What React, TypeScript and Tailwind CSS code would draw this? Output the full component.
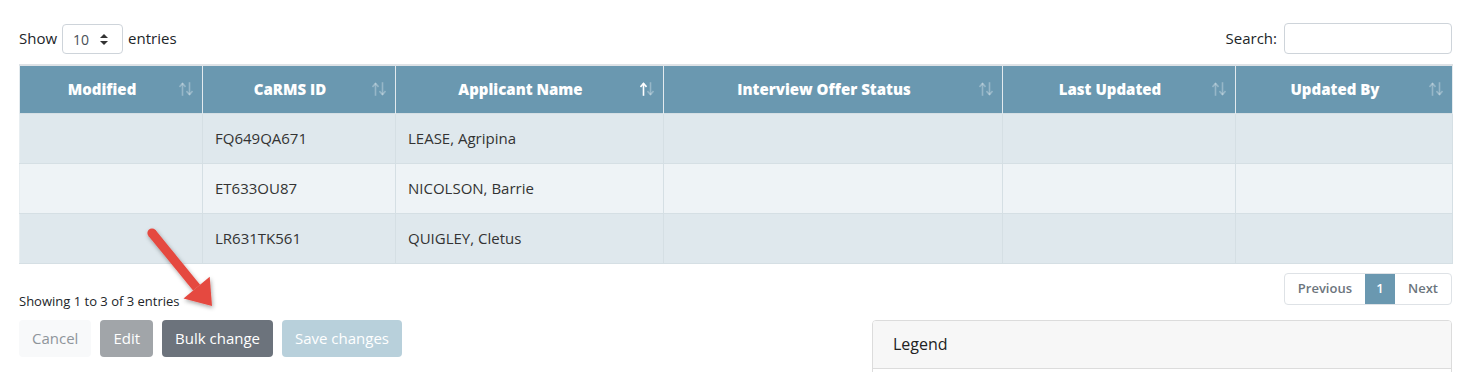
import { ReactNode } from "react";

const font = { fontFamily: '"Open Sans", "Liberation Sans", sans-serif' };

interface Col {
    label: string
    width: string
    sorted?: boolean
}

const columns: Col[] = [
    { label: "Modified", width: "w-[183px]" },
    { label: "CaRMS ID", width: "w-[193px]" },
    { label: "Applicant Name", width: "w-[268px]", sorted: true },
    { label: "Interview Offer Status", width: "w-[339px]" },
    { label: "Last Updated", width: "w-[233px]" },
    { label: "Updated By", width: "w-[217px]" },
];

const rows = [
    ["", "FQ649QA671", "LEASE, Agripina", "", "", ""],
    ["", "ET633OU87", "NICOLSON, Barrie", "", "", ""],
    ["", "LR631TK561", "QUIGLEY, Cletus", "", "", ""],
];

// up/down arrows used by DataTables for sortable headers
const SortIcon = ({ active }: { active?: boolean }) => (
    <svg className="absolute right-[9px] top-1/2 -translate-y-1/2" width="14" height="14" viewBox="0 0 14 14">
        <g fill="none" strokeWidth="1.6" strokeLinecap="square">
            <g stroke={active ? "#ffffff" : "rgba(255,255,255,0.3)"}>
                <path d="M3.5 13V1.8" />
                <path d="M1 4.3L3.5 1.5L6 4.3" />
            </g>
            <g stroke="rgba(255,255,255,0.3)">
                <path d="M10.5 1V12.2" />
                <path d="M8 9.7L10.5 12.5L13 9.7" />
            </g>
        </g>
    </svg>
);

const Btn = ({ children, className }: { children: ReactNode, className: string }) => (
    <button className={"h-[37px] rounded-[4px] px-[13px] text-[15px] whitespace-nowrap " + className}>{children}</button>
);

const Arrow = () => (
    <svg className="absolute left-0 top-0 pointer-events-none" width="260" height="330" viewBox="0 0 260 330">
        <defs>
            <filter id="sh" x="-20%" y="-20%" width="140%" height="140%">
                <feDropShadow dx="1" dy="2" stdDeviation="2" floodColor="#000" floodOpacity="0.35" />
            </filter>
        </defs>
        <g fill="#e5483f" filter="url(#sh)">
            <circle cx="152" cy="233" r="4.6" />
            <polygon points="148.5,235.9 155.5,230.1 200.1,284.7 193.1,290.5" />
            <polygon points="183.5,298.5 209.7,276.7 212,306" />
        </g>
    </svg>
);

export default function App() {
    return (
        <div style={font} className="relative w-[1476px] h-[372px] overflow-hidden bg-white text-[#212529] pl-[19px] pr-[24px] pt-[22px]">
            {/* top controls */}
            <div className="flex justify-between items-center h-[32px] mb-[10px]">
                <div className="flex items-center text-[15px]">
                    <span>Show</span>
                    <div className="ml-[5px] mr-[5px] flex items-center justify-between w-[61px] h-[30px] mt-[2px] border border-[#ced4da] rounded-[4px] pl-[10px] pr-[14px] text-[14px]">
                        <span className="text-[#495057]">10</span>
                        <svg width="8" height="11" viewBox="0 0 8 11">
                            <path d="M4 0L8 4H0Z M0 7H8L4 11Z" fill="#333" />
                        </svg>
                    </div>
                    <span>entries</span>
                </div>
                <div className="flex items-center text-[15px]">
                    <span>Search:</span>
                    <input className="ml-[7px] w-[168px] h-[31px] border border-[#ced4da] rounded-[4px] outline-none" />
                </div>
            </div>

            {/* table */}
            <table className="w-full table-fixed border-collapse border-t-2 border-[#dee2e6]">
                <colgroup>
                    {columns.map((c) => <col key={c.label} className={c.width} />)}
                </colgroup>
                <thead>
                    <tr className="bg-[#6a98b0] text-white">
                        {columns.map((c) => (
                            <th key={c.label} className="relative h-[48px] border-x border-[#e3eaee] pl-[12px] pr-[30px] text-[15px] font-extrabold text-center whitespace-nowrap">
                                {c.label}
                                <SortIcon active={c.sorted} />
                            </th>
                        ))}
                    </tr>
                </thead>
                <tbody>
                    {rows.map((r, i) => (
                        <tr key={i} className={i % 2 === 1 ? "bg-[#eef3f6]" : "bg-[#dfe8ed]"}>
                            {r.map((cell, j) => (
                                <td key={j} className="h-[50px] border border-[#d5dfe4] border-l-[#e8eef1] px-[12px] text-[15px] text-[#333]">
                                    {cell}
                                </td>
                            ))}
                        </tr>
                    ))}
                </tbody>
            </table>

            {/* info + pagination */}
            <div className="flex justify-between h-[32px] mt-[9px]">
                <div className="pt-[20px] leading-[16px] text-[13px] text-[#212529]">Showing 1 to 3 of 3 entries</div>
                <div className="flex h-[32px] border border-[#dee2e6] rounded-[4px] text-[13px] font-semibold overflow-hidden">
                    <span className="px-[13px] flex items-center text-[#6c757d]">Previous</span>
                    <span className="w-[30px] flex items-center justify-center bg-[#6a98b0] text-white">1</span>
                    <span className="px-[13px] flex items-center text-[#6c757d]">Next</span>
                </div>
            </div>

            {/* buttons + legend */}
            <div className="flex justify-between mt-[15px]">
                <div className="flex gap-[9px]">
                    <Btn className="bg-[#f8f9fa] text-[#8f959a]">Cancel</Btn>
                    <Btn className="bg-[#a1a5a9] text-white">Edit</Btn>
                    <Btn className="bg-[#6c737c] text-white">Bulk change</Btn>
                    <Btn className="bg-[#b8d0db] text-white">Save changes</Btn>
                </div>
                <div className="w-[580px] h-[60px] border border-[#dcdcdc] rounded-[4px] overflow-hidden">
                    <div className="h-[48px] bg-[#f7f7f7] border-b border-[#dcdcdc] flex items-center px-[20px] text-[16px] text-[#222]">
                        Legend
                    </div>
                </div>
            </div>

            <Arrow />
        </div>
    );
}
